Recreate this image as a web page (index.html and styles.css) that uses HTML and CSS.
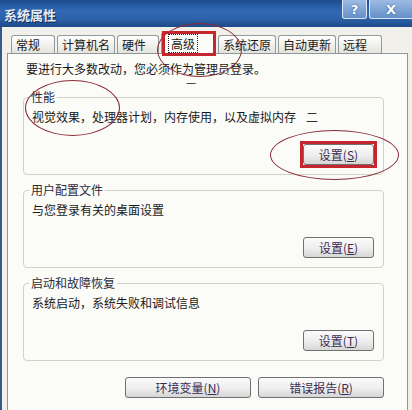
FILE: index.html
```html
<!DOCTYPE html>
<html>
<head>
  <meta charset="UTF-8">
  <title>系统属性</title>
  <link rel="stylesheet" href="styles.css">
</head>
<body>
  <div class="window">
    <div class="titlebar">
      <span class="title">系统属性</span>
      <div class="caption-buttons">
        <span class="cap-btn help">?</span>
        <span class="cap-btn close">X</span>
      </div>
    </div>

    <div class="tabs">
      <span class="tab short">常规</span>
      <span class="tab">计算机名</span>
      <span class="tab short hw">硬件</span>
      <span class="tab active"><span class="focus">高级</span></span>
      <span class="tab">系统还原</span>
      <span class="tab">自动更新</span>
      <span class="tab short">远程</span>
    </div>

    <div class="panel">
      <p class="intro">要进行大多数改动，您必须作为管理员登录。</p>

      <fieldset class="group first">
        <legend>性能</legend>
        <p class="desc">视觉效果，处理器计划，内存使用，以及虚拟内存<span class="mark-two">二</span></p>
        <div class="group-actions"><button>设置(<u>S</u>)</button></div>
      </fieldset>

      <fieldset class="group">
        <legend>用户配置文件</legend>
        <p class="desc">与您登录有关的桌面设置</p>
        <div class="group-actions"><button>设置(<u>E</u>)</button></div>
      </fieldset>

      <fieldset class="group">
        <legend>启动和故障恢复</legend>
        <p class="desc">系统启动，系统失败和调试信息</p>
        <div class="group-actions"><button>设置(<u>T</u>)</button></div>
      </fieldset>

      <div class="footer-actions">
        <button class="wide">环境变量(<u>N</u>)</button>
        <button class="wide">错误报告(<u>R</u>)</button>
      </div>
    </div>

    <!-- hand-drawn annotations on top of the screenshot -->
    <div class="ring ring-tab"></div>
    <div class="ring ring-perf"></div>
    <div class="ring ring-btn"></div>
    <div class="box box-tab"></div>
    <div class="box box-btn"></div>
    <span class="mark-one">一</span>
  </div>
</body>
</html>
```

FILE: styles.css
```css
body {
  margin: 0;
  width: 412px;
  height: 410px;
  overflow: hidden;
  background: #f1f0ea;
  font-family: "Noto Sans CJK SC", "Noto Sans", sans-serif;
  font-size: 12px;
  color: #1a1a1a;
}
.window {
  position: relative;
  width: 412px;
  height: 410px;
  border-left: 2px solid #35598e;
  box-sizing: border-box;
}
.titlebar {
  display: flex;
  align-items: flex-start;
  height: 27px;
  margin-left: -2px;
  background: linear-gradient(to bottom, #1d4c8f 0%, #3069b2 40%, #2c62a9 70%, #1d4a8a 100%);
}
.title {
  margin: 6px 0 0 4px;
  font-size: 13px;
  font-weight: bold;
  line-height: 17px;
  color: #e6ecf4;
  text-shadow: 1px 1px 0 #0b2857;
}
.caption-buttons {
  display: flex;
  gap: 2px;
  margin-left: auto;
}
.cap-btn {
  display: flex;
  align-items: center;
  justify-content: center;
  height: 18px;
  border: 1px solid #dbe6f4;
  border-top: none;
  border-radius: 0 0 3px 3px;
  background: linear-gradient(to bottom, #9dbbe2, #6590c9);
  color: #fff;
  font-family: "DejaVu Sans", sans-serif;
  font-weight: bold;
  font-size: 13px;
  text-shadow: 0 0 2px #2a4f86;
}
.help {
  width: 23px;
}
.close {
  width: 42px;
  border-right: none;
  border-radius: 0 0 0 3px;
}
.tabs {
  display: flex;
  align-items: flex-end;
  gap: 2px;
  height: 21px;
  margin-top: 5px;
  padding-left: 9px;
}
.tab {
  height: 17px;
  padding: 0 4px;
  line-height: 17px;
  border: 1px solid #919b9c;
  border-bottom: none;
  border-radius: 3px 3px 0 0;
  background: linear-gradient(to bottom, #ffffff, #e4e4dc);
  white-space: nowrap;
}
.tab.short {
  padding-right: 14px;
}
.tab.hw {
  padding-right: 12px;
}
.tab.active {
  position: relative;
  height: 21px;
  margin-bottom: -1px;
  padding: 0 17px 0 6px;
  line-height: 21px;
  background: #fbfbf8;
}
.focus {
  padding: 1px 3px;
  outline: 1px dotted #222;
  outline-offset: -1px;
}
.panel {
  height: 356px;
  margin: 0 4px 0 5px;
  border: 1px solid #8e989c;
  border-bottom: none;
  background: #fbfbf8;
}
.intro {
  margin: 0;
  padding: 8px 0 0 18px;
  line-height: 14px;
}
.group {
  margin: 8px 23px 0 15px;
  padding: 6px 9px 9px 8px;
  border: 1px solid #d2d2c4;
  border-radius: 4px;
  min-width: 0;
}
.group.first {
  margin-top: 14px;
}
.group legend {
  margin-left: -3px;
  padding: 0 2px;
  line-height: 14px;
  color: #2b2b3a;
}
.desc {
  margin: 0;
  line-height: 14px;
}
.mark-two {
  margin-left: 10px;
  color: #333;
}
.group-actions {
  display: flex;
  justify-content: flex-end;
  margin-top: 20px;
}
button {
  width: 71px;
  height: 21px;
  padding: 0;
  border: 1px solid #707070;
  border-radius: 3px;
  background: linear-gradient(to bottom, #fbfbfb 0%, #eeeeee 55%, #d6d6d6 100%);
  font-family: "Noto Sans CJK SC", "Noto Sans", sans-serif;
  font-size: 12px;
  line-height: 19px;
  color: #3d2c52;
}
.footer-actions {
  display: flex;
  justify-content: flex-end;
  gap: 7px;
  margin: 16px 23px 0 0;
}
button.wide {
  width: 126px;
}
.ring {
  position: absolute;
  border: 1px solid #8a2a38;
  border-radius: 50%;
}
.ring-tab {
  left: 155px;
  top: 23px;
  width: 83px;
  height: 52px;
}
.ring-perf {
  left: 23px;
  top: 80px;
  width: 93px;
  height: 54px;
}
.ring-btn {
  left: 268px;
  top: 130px;
  width: 127px;
  height: 48px;
}
.box {
  position: absolute;
  border: 3px solid #c3262e;
}
.box-tab {
  left: 160px;
  top: 31px;
  width: 48px;
  height: 19px;
}
.box-btn {
  left: 298px;
  top: 141px;
  width: 71px;
  height: 21px;
}
.mark-one {
  position: absolute;
  left: 184px;
  top: 80px;
  font-size: 10px;
  line-height: 8px;
  color: #222;
}
```
